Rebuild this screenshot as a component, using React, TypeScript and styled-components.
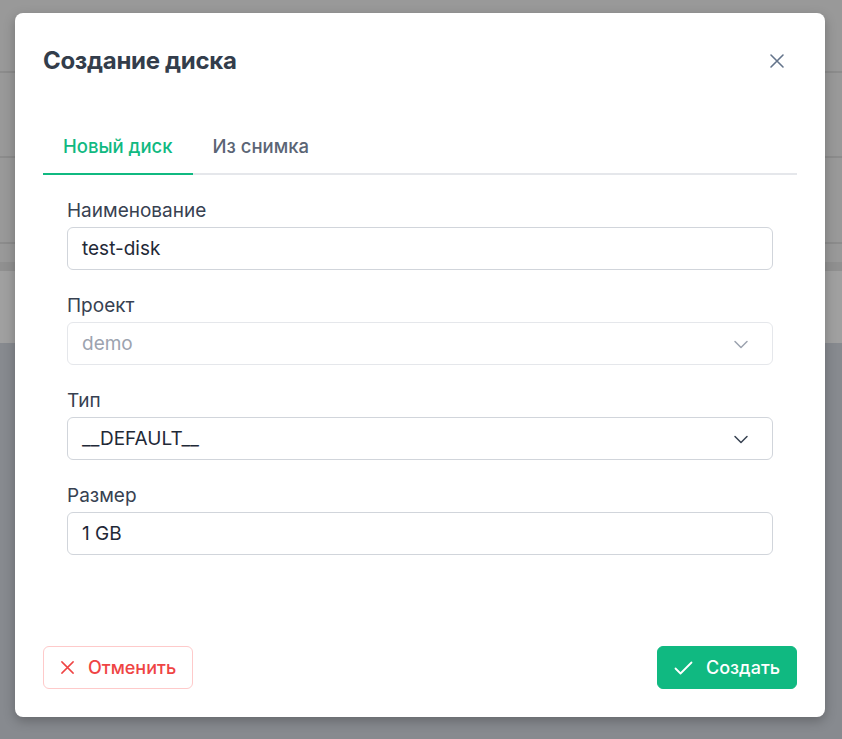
import styled, { createGlobalStyle } from "styled-components"

const GlobalStyle = createGlobalStyle`
  html, body {
    margin: 0;
    padding: 0;
  }
  body {
    min-height: 739px;
    font-family: Inter, "Noto Sans", sans-serif;
    background:
      linear-gradient(
        to bottom,
        #999999 0px,
        #999999 71px,
        #8c8c8c 71px,
        #8c8c8c 73px,
        #999999 73px,
        #999999 156px,
        #8c8c8c 156px,
        #8c8c8c 158px,
        #999999 158px,
        #999999 242px,
        #8c8c8c 242px,
        #8c8c8c 244px,
        #999999 244px,
        #999999 262px,
        #909090 262px,
        #909090 271px,
        #a0a0a0 271px,
        #a0a0a0 343px,
        #878a8f 343px
      );
  }
`

const Overlay = styled.div`
  display: flex;
  justify-content: center;
  padding: 13px 2px 0 0;
`

const Modal = styled.div`
  width: 810px;
  height: 704px;
  box-sizing: border-box;
  background: #ffffff;
  border-radius: 8px;
  box-shadow: 0 4px 12px rgba(0, 0, 0, 0.25);
  padding: 33px 28px 28px;
  display: flex;
  flex-direction: column;
`

const Header = styled.div`
  display: flex;
  align-items: center;
  justify-content: space-between;
  height: 30px;
`

const Title = styled.h2`
  margin: 0;
  font-size: 24px;
  line-height: 30px;
  font-weight: 700;
  color: #333d4b;
  letter-spacing: -0.3px;
`

const CloseButton = styled.button`
  border: none;
  background: none;
  padding: 0;
  width: 24px;
  height: 24px;
  margin-right: 8px;
  display: flex;
  align-items: center;
  justify-content: center;
  color: #64748b;
`

const TabList = styled.div`
  display: flex;
  margin-top: 46px;
  border-bottom: 2px solid #e5e7eb;
`

const Tab = styled.div<{ $active?: boolean }>`
  padding: 12px 20px 15px;
  margin-bottom: -2px;
  font-size: 18.5px;
  line-height: 24px;
  font-weight: 500;
  color: ${(p) => (p.$active ? "#10b981" : "#5b6575")};
  border-bottom: 2px solid ${(p) => (p.$active ? "#10b981" : "transparent")};
`

const Form = styled.div`
  display: flex;
  flex-direction: column;
  gap: 24px;
  padding: 24px 24px 0;
`

const Field = styled.div`
  display: flex;
  flex-direction: column;
  gap: 4px;
`

const Label = styled.label`
  font-size: 19px;
  line-height: 24px;
  color: #374151;
`

const Box = styled.div<{ $disabled?: boolean }>`
  height: 43px;
  box-sizing: border-box;
  border: 1px solid ${(p) => (p.$disabled ? "#e5e7eb" : "#d1d5db")};
  border-radius: 6px;
  padding: 0 23px 0 14px;
  display: flex;
  align-items: center;
  justify-content: space-between;
  font-size: 19px;
  color: ${(p) => (p.$disabled ? "#9ca3af" : "#1f2937")};
`

const Chevron = styled.svg<{ $disabled?: boolean }>`
  color: ${(p) => (p.$disabled ? "#9ca3af" : "#374151")};
`

const Footer = styled.div`
  margin-top: auto;
  display: flex;
  justify-content: space-between;
`

const Button = styled.button<{ $variant: "danger" | "primary" }>`
  height: 43px;
  box-sizing: border-box;
  border-radius: 6px;
  display: flex;
  align-items: center;
  gap: 13px;
  padding: 0 16px;
  font-family: inherit;
  font-size: 18px;
  font-weight: 500;
  border: 1px solid ${(p) => (p.$variant === "danger" ? "#fecaca" : "#10b981")};
  background: ${(p) => (p.$variant === "danger" ? "#ffffff" : "#10b981")};
  color: ${(p) => (p.$variant === "danger" ? "#ef4444" : "#ffffff")};
`

const ChevronDown = ({ disabled }: { disabled?: boolean }) => (
  <Chevron $disabled={disabled} width="16" height="16" viewBox="0 0 16 16" fill="none">
    <path d="M2 5.5 8 11.5 14 5.5" stroke="currentColor" strokeWidth="1.5" strokeLinecap="round" strokeLinejoin="round" />
  </Chevron>
)

const CrossIcon = ({ size = 16 }: { size?: number }) => (
  <svg width={size} height={size} viewBox="0 0 16 16" fill="none">
    <path d="M2 2 14 14 M14 2 2 14" stroke="currentColor" strokeWidth="1.6" strokeLinecap="round" />
  </svg>
)

const CheckIcon = () => (
  <svg width="19" height="16" viewBox="0 0 19 16" fill="none">
    <path d="M1.5 8.5 6.5 13.5 17.5 2.5" stroke="currentColor" strokeWidth="1.8" strokeLinecap="round" strokeLinejoin="round" />
  </svg>
)

export default function App() {
  return (
    <>
      <GlobalStyle />
      <Overlay>
        <Modal>
          <Header>
            <Title>Создание диска</Title>
            <CloseButton>
              <CrossIcon size={16} />
            </CloseButton>
          </Header>
          <TabList>
            <Tab $active>Новый диск</Tab>
            <Tab>Из снимка</Tab>
          </TabList>
          <Form>
            <Field>
              <Label>Наименование</Label>
              <Box>test-disk</Box>
            </Field>
            <Field>
              <Label>Проект</Label>
              <Box $disabled>
                demo
                <ChevronDown disabled />
              </Box>
            </Field>
            <Field>
              <Label>Тип</Label>
              <Box>
                __DEFAULT__
                <ChevronDown />
              </Box>
            </Field>
            <Field>
              <Label>Размер</Label>
              <Box>1 GB</Box>
            </Field>
          </Form>
          <Footer>
            <Button $variant="danger">
              <CrossIcon size={15} />
              Отменить
            </Button>
            <Button $variant="primary">
              <CheckIcon />
              Создать
            </Button>
          </Footer>
        </Modal>
      </Overlay>
    </>
  )
}
